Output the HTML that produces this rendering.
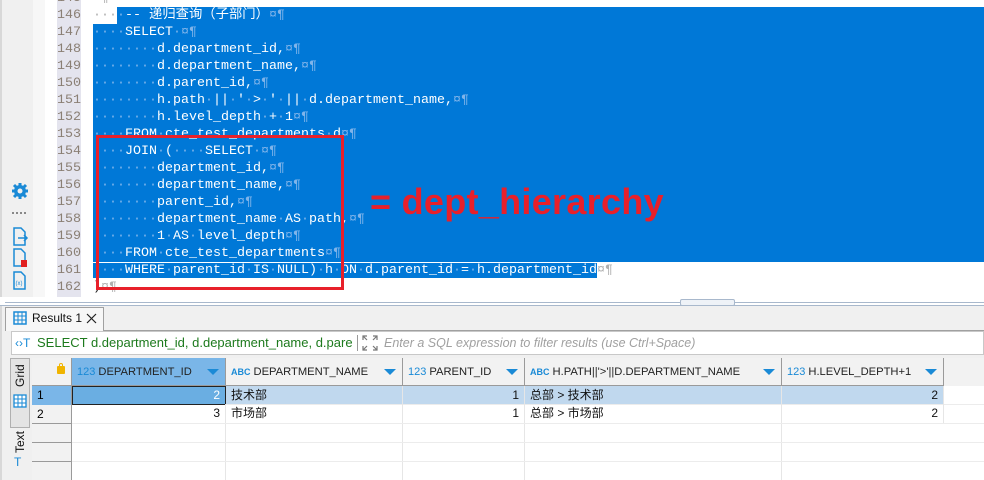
<!DOCTYPE html>
<html><head><meta charset="utf-8"><style>
*{margin:0;padding:0;box-sizing:border-box}
body{width:984px;height:480px;overflow:hidden;background:#fff;position:relative;font-family:"Liberation Sans","Noto Sans CJK SC",sans-serif}
.abs{position:absolute}
.ln{position:absolute;left:57px;width:24px;height:17px;font:13.33px/17px "Liberation Mono",monospace;color:#8a7f74;text-align:left}
.cl{position:absolute;left:93px;height:17px;font:13.33px/17px "Liberation Mono","Noto Sans CJK SC",monospace;white-space:pre;color:#fff}
.s{background:#0078d7}
.d{color:#7fb4ea}
.u{color:#b0b0b0}
.hd{position:absolute;top:358px;height:28px;background:#f2f2f2;border-right:1px solid #9a9a9a;font-size:11.2px;line-height:28px;color:#222;padding-left:5px;white-space:nowrap}
.hd .t{color:#1a8ad6;font-size:11px;margin-right:3px}
.hd .ar{position:absolute;right:6px;top:11px;width:0;height:0;border-left:6px solid transparent;border-right:6px solid transparent;border-top:6px solid #1a8ad6}
.c{position:absolute;height:19px;font-size:12px;line-height:19px;color:#111;padding:0 5px;white-space:nowrap;border-right:1px solid #e6e6e6}
.r{text-align:right}
</style></head><body>
<div class="abs" style="left:0;top:0;width:2px;height:297px;background:#d8d8d8"></div>
<div class="abs" style="left:2px;top:0;width:31px;height:297px;background:#f0f0f0"></div>
<div class="abs" style="left:33px;top:0;width:12px;height:297px;background:#f7f7f7"></div>
<div class="abs" style="left:57px;top:0;width:24px;height:297px;background:#e4e4ee"></div>
<svg class="abs" style="left:11px;top:182px" width="18" height="110" viewBox="0 0 18 110">
<circle cx="9" cy="9" r="6" fill="#1a8ad6"/><g stroke="#1a8ad6" stroke-width="3"><line x1="9" y1="1" x2="9" y2="17"/><line x1="1" y1="9" x2="17" y2="9"/><line x1="3" y1="3" x2="15" y2="15"/><line x1="15" y1="3" x2="3" y2="15"/></g><circle cx="9" cy="9" r="2.5" fill="#f0f0f0"/>
<g fill="#888"><rect x="1" y="30" width="2" height="2"/><rect x="5" y="30" width="2" height="2"/><rect x="9" y="30" width="2" height="2"/><rect x="13" y="30" width="2" height="2"/></g>
<path d="M3 46h7l4 4v13H3z" fill="none" stroke="#1a8ad6" stroke-width="1.5"/><path d="M7 56h9M13 53l3 3-3 3" fill="none" stroke="#1a8ad6" stroke-width="1.5"/>
<path d="M3 67h7l4 4v13H3z" fill="none" stroke="#1a8ad6" stroke-width="1.5"/><rect x="10" y="78" width="6" height="7" fill="#e02020"/>
<path d="M3 90h7l4 4v13H3z" fill="none" stroke="#1a8ad6" stroke-width="1.5"/><text x="4.5" y="103" font-size="6" fill="#1a8ad6" font-family="Liberation Sans">(x)</text>
</svg>
<div class="ln" style="top:7px">146</div><div class="ln" style="top:24px">147</div><div class="ln" style="top:41px">148</div><div class="ln" style="top:58px">149</div><div class="ln" style="top:75px">150</div><div class="ln" style="top:92px">151</div><div class="ln" style="top:109px">152</div><div class="ln" style="top:126px">153</div><div class="ln" style="top:143px">154</div><div class="ln" style="top:160px">155</div><div class="ln" style="top:177px">156</div><div class="ln" style="top:194px">157</div><div class="ln" style="top:211px">158</div><div class="ln" style="top:228px">159</div><div class="ln" style="top:245px">160</div><div class="ln" style="top:262px">161</div><div class="ln" style="top:279px">162</div>
<div class="ln" style="top:-10px">145</div>
<div class="cl" style="top:-10px"><span class="u">¤¶</span></div>
<div class="cl" style="top:7px"><span class="u">···</span><span class="s" style="display:inline-block;width:867px"><span class="d">·</span>-- 递归查询（子部门）<span class="d">¤¶</span></span></div>
<div class="cl s" style="top:24px;width:891px"><span class="d">····</span>SELECT<span class="d">·¤¶</span></div>
<div class="cl s" style="top:41px;width:891px"><span class="d">········</span>d.department_id,<span class="d">¤¶</span></div>
<div class="cl s" style="top:58px;width:891px"><span class="d">········</span>d.department_name,<span class="d">¤¶</span></div>
<div class="cl s" style="top:75px;width:891px"><span class="d">········</span>d.parent_id,<span class="d">¤¶</span></div>
<div class="cl s" style="top:92px;width:891px"><span class="d">········</span>h.path<span class="d">·</span>||<span class="d">·</span>'<span class="d">·</span>&gt;<span class="d">·</span>'<span class="d">·</span>||<span class="d">·</span>d.department_name,<span class="d">¤¶</span></div>
<div class="cl s" style="top:109px;width:891px"><span class="d">········</span>h.level_depth<span class="d">·</span>+<span class="d">·</span>1<span class="d">¤¶</span></div>
<div class="cl s" style="top:126px;width:891px"><span class="d">····</span>FROM<span class="d">·</span>cte_test_departments<span class="d">·</span>d<span class="d">¤¶</span></div>
<div class="cl s" style="top:143px;width:891px"><span class="d">····</span>JOIN<span class="d">·</span>(<span class="d">····</span>SELECT<span class="d">·¤¶</span></div>
<div class="cl s" style="top:160px;width:891px"><span class="d">········</span>department_id,<span class="d">¤¶</span></div>
<div class="cl s" style="top:177px;width:891px"><span class="d">········</span>department_name,<span class="d">¤¶</span></div>
<div class="cl s" style="top:194px;width:891px"><span class="d">········</span>parent_id,<span class="d">¤¶</span></div>
<div class="cl s" style="top:211px;width:891px"><span class="d">········</span>department_name<span class="d">·</span>AS<span class="d">·</span>path,<span class="d">¤¶</span></div>
<div class="cl s" style="top:228px;width:891px"><span class="d">········</span>1<span class="d">·</span>AS<span class="d">·</span>level_depth<span class="d">¤¶</span></div>
<div class="cl s" style="top:245px;width:891px"><span class="d">····</span>FROM<span class="d">·</span>cte_test_departments<span class="d">¤¶</span></div>
<div class="cl" style="top:262px"><span class="s"><span class="d">····</span>WHERE<span class="d">·</span>parent_id<span class="d">·</span>IS<span class="d">·</span>NULL)<span class="d">·</span>h<span class="d">·</span>ON<span class="d">·</span>d.parent_id<span class="d">·</span>=<span class="d">·</span>h.department_id</span><span class="u">¤¶</span></div>
<div class="cl" style="top:279px;color:#222">)<span class="u">¤¶</span></div>
<div class="abs" style="left:96px;top:135px;width:248px;height:155px;border:3px solid #e8202a"></div>
<div class="abs" style="left:370px;top:180px;font:bold 36px/44px 'Liberation Sans',sans-serif;color:#e8202a;white-space:nowrap;letter-spacing:0.3px">= dept_hierarchy</div>
<div class="abs" style="left:0;top:297px;width:984px;height:9px;background:#fff;border-bottom:1px solid #a8b8cc"></div>
<div class="abs" style="left:5px;top:302px;width:979px;height:1px;background:#a8b8cc"></div>
<div class="abs" style="left:680px;top:299px;width:55px;height:7px;background:#eef2f7;border:1px solid #a8b8cc;border-radius:2px"></div>
<div class="abs" style="left:0;top:306px;width:984px;height:174px;background:#f0f0f0"></div>
<div class="abs" style="left:0;top:306px;width:2px;height:174px;background:#d8d8d8"></div>
<div class="abs" style="left:5px;top:330px;width:979px;height:1px;background:#a0a0a0"></div>
<div class="abs" style="left:5px;top:307px;width:99px;height:24px;background:#f7f7f7;border:1px solid #a0a0a0;border-bottom:none"></div>
<svg class="abs" style="left:13px;top:311px" width="14" height="14"><rect x="1" y="1" width="12" height="12" fill="none" stroke="#1a8ad6" stroke-width="1.5"/><path d="M1 5h12M1 9h12M5 1v12M9 1v12" stroke="#1a8ad6" stroke-width="1"/></svg>
<div class="abs" style="left:32px;top:309px;font-size:12px;line-height:18px;color:#111">Results 1</div>
<svg class="abs" style="left:86px;top:313px" width="11" height="11"><path d="M1 1L10 10M10 1L1 10" stroke="#222" stroke-width="1.2"/></svg>
<div class="abs" style="left:11px;top:331px;width:973px;height:24px;background:#fff;border:1px solid #c8c8c8"></div>
<div class="abs" style="left:15px;top:336px;font-size:12px;line-height:14px;color:#1a8ad6">‹›T</div>
<div class="abs" style="left:37px;top:334px;font-size:13px;line-height:18px;color:#1d7a1d;width:316px;overflow:hidden;white-space:nowrap">SELECT d.department_id, d.department_name, d.parent_id</div>
<div class="abs" style="left:357px;top:335px;width:1px;height:16px;background:#999"></div>
<svg class="abs" style="left:362px;top:335px" width="16" height="16" stroke="#777" fill="none" stroke-width="1.2"><path d="M1 5V1h4M1 1l4 4M11 1h4v4M15 1l-4 4M1 11v4h4M1 15l4-4M15 11v4h-4M15 15l-4-4"/></svg>
<div class="abs" style="left:384px;top:334px;font-size:12.5px;line-height:18px;color:#a0a0a0;font-style:italic;white-space:nowrap">Enter a SQL expression to filter results (use Ctrl+Space)</div>
<div class="abs" style="left:10px;top:358px;width:20px;height:70px;background:#e4e4e4;border:1px solid #b0b0b0"></div>
<div class="abs" style="left:10px;top:361px;width:20px;height:30px;font-size:12px;color:#111;writing-mode:vertical-rl;transform:rotate(180deg);line-height:20px;text-align:center">Grid</div>
<svg class="abs" style="left:13px;top:394px" width="14" height="14"><rect x="1" y="1" width="12" height="12" fill="#fff" stroke="#1a8ad6" stroke-width="1.3"/><path d="M1 5h12M1 9h12M5 1v12M9 1v12" stroke="#1a8ad6"/></svg>
<div class="abs" style="left:10px;top:428px;width:20px;height:28px;font-size:12px;color:#111;writing-mode:vertical-rl;transform:rotate(180deg);line-height:20px;text-align:center">Text</div>
<div class="abs" style="left:14px;top:455px;font-size:12px;color:#1a8ad6">T</div>
<div class="abs" style="left:32px;top:358px;width:952px;height:122px;background:#fff"></div>
<div class="abs" style="left:32px;top:358px;width:40px;height:28px;background:#f2f2f2;border-right:1px solid #9a9a9a"></div>
<div class="abs" style="left:57px;top:366px;width:8px;height:8px;background:#f0b400;border-radius:1px"></div>
<div class="abs" style="left:59px;top:363px;width:4px;height:5px;border:1px solid #f0b400;border-bottom:none;border-radius:2px 2px 0 0"></div>
<div class="hd" style="left:72px;width:154px;background:#7ab6e8"><span class="t">123</span>DEPARTMENT_ID<span class="ar"></span></div>
<div class="hd" style="left:226px;width:177px"><span class="t" style="font-weight:bold;font-size:9px">ABC</span>DEPARTMENT_NAME<span class="ar"></span></div>
<div class="hd" style="left:403px;width:122px"><span class="t">123</span>PARENT_ID<span class="ar"></span></div>
<div class="hd" style="left:525px;width:257px"><span class="t" style="font-weight:bold;font-size:9px">ABC</span>H.PATH||'&gt;'||D.DEPARTMENT_NAME<span class="ar"></span></div>
<div class="hd" style="left:782px;width:162px"><span class="t">123</span>H.LEVEL_DEPTH+1<span class="ar"></span></div>
<div class="abs" style="left:944px;top:358px;width:40px;height:28px;background:#f2f2f2"></div>
<div class="abs" style="left:32px;top:385px;width:912px;height:1px;background:#9a9a9a"></div>
<div class="abs" style="left:32px;top:386px;width:40px;height:94px;background:#f2f2f2;border-right:1px solid #9a9a9a"></div>
<div class="abs" style="left:32px;top:386px;width:40px;height:19px;background:#7ab6e8;border-right:1px solid #9a9a9a"></div>
<div class="abs" style="left:37px;top:386px;font-size:12px;line-height:19px">1</div>
<div class="abs" style="left:37px;top:405px;font-size:12px;line-height:19px">2</div>
<div class="abs" style="left:32px;top:423px;width:40px;height:1px;background:#9a9a9a"></div>
<div class="abs" style="left:32px;top:442px;width:40px;height:1px;background:#9a9a9a"></div>
<div class="abs" style="left:32px;top:461px;width:40px;height:1px;background:#9a9a9a"></div>
<div class="abs" style="left:72px;top:386px;width:872px;height:19px;background:#c0d8ee"></div>
<div class="abs" style="left:225px;top:405px;width:1px;height:75px;background:#e6e6e6"></div>
<div class="abs" style="left:402px;top:405px;width:1px;height:75px;background:#e6e6e6"></div>
<div class="abs" style="left:524px;top:405px;width:1px;height:75px;background:#e6e6e6"></div>
<div class="abs" style="left:781px;top:405px;width:1px;height:75px;background:#e6e6e6"></div>
<div class="abs" style="left:72px;top:423px;width:912px;height:1px;background:#ececec"></div>
<div class="abs" style="left:72px;top:442px;width:912px;height:1px;background:#ececec"></div>
<div class="abs" style="left:72px;top:461px;width:912px;height:1px;background:#ececec"></div>
<div class="abs" style="left:72px;top:404px;width:912px;height:1px;background:#ececec"></div>
<div class="c r" style="left:72px;top:386px;width:154px;background:#6aaee2;border:1px solid #222;color:#fff;line-height:17px">2</div>
<div class="c" style="left:226px;top:386px;width:177px">技术部</div>
<div class="c r" style="left:403px;top:386px;width:122px">1</div>
<div class="c" style="left:525px;top:386px;width:257px">总部 &gt; 技术部</div>
<div class="c r" style="left:782px;top:386px;width:162px">2</div>
<div class="c r" style="left:72px;top:404px;width:154px">3</div>
<div class="c" style="left:226px;top:404px;width:177px">市场部</div>
<div class="c r" style="left:403px;top:404px;width:122px">1</div>
<div class="c" style="left:525px;top:404px;width:257px">总部 &gt; 市场部</div>
<div class="c r" style="left:782px;top:404px;width:162px">2</div>
</body></html>
